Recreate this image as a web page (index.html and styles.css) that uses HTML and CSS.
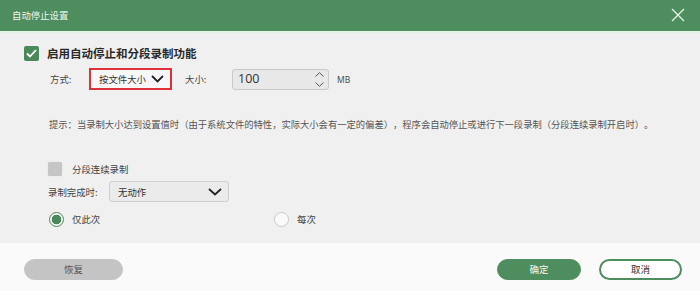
FILE: index.html
```html
<!DOCTYPE html>
<html lang="zh-CN">
<head>
<meta charset="utf-8">
<link rel="stylesheet" href="styles.css">
</head>
<body>
<div class="dialog">
  <header class="titlebar">
    <span class="title">自动停止设置</span>
    <svg class="close" width="14" height="14" viewBox="0 0 14 14"><path d="M1 1 L13 13 M13 1 L1 13" stroke="#e6f5e9" stroke-width="1.3" fill="none"/></svg>
  </header>
  <main class="content">
    <div class="row-main">
      <span class="check on"><svg width="11" height="9" viewBox="0 0 11 9"><path d="M1 4.5 L4 7.5 L10 1" stroke="#fff" stroke-width="1.8" fill="none"/></svg></span>
      <span class="main-label">启用自动停止和分段录制功能</span>
    </div>
    <div class="row-mode">
      <span class="lbl lbl-mode">方式:</span>
      <div class="select select-red">
        <span>按文件大小</span>
        <svg width="13" height="8" viewBox="0 0 13 8"><path d="M1 1 L6.5 6.5 L12 1" stroke="#222" stroke-width="1.8" fill="none"/></svg>
      </div>
      <span class="lbl lbl-size">大小:</span>
      <div class="spin">
        <span class="spin-val">100</span>
        <div class="spin-arrows">
          <svg width="9" height="5" viewBox="0 0 9 5"><path d="M0.5 4.5 L4.5 0.7 L8.5 4.5" stroke="#555" stroke-width="1" fill="none"/></svg>
          <svg width="9" height="5" viewBox="0 0 9 5"><path d="M0.5 0.5 L4.5 4.3 L8.5 0.5" stroke="#555" stroke-width="1" fill="none"/></svg>
        </div>
      </div>
      <span class="unit">MB</span>
    </div>
    <p class="hint">提示：当录制大小达到设置值时（由于系统文件的特性，实际大小会有一定的偏差），程序会自动停止或进行下一段录制（分段连续录制开启时）。</p>
    <div class="row-seg">
      <span class="check off"></span>
      <span class="lbl">分段连续录制</span>
    </div>
    <div class="row-done">
      <span class="lbl lbl-done">录制完成时:</span>
      <div class="select select-gray">
        <span>无动作</span>
        <svg width="14" height="8" viewBox="0 0 14 8"><path d="M1 1 L7 6.5 L13 1" stroke="#222" stroke-width="1.8" fill="none"/></svg>
      </div>
    </div>
    <div class="row-radio">
      <label class="opt"><span class="radio sel"></span><span class="lbl">仅此次</span></label>
      <label class="opt"><span class="radio"></span><span class="lbl">每次</span></label>
    </div>
  </main>
  <footer class="footer">
    <button class="btn btn-reset">恢复</button>
    <span class="spacer"></span>
    <button class="btn btn-ok">确定</button>
    <button class="btn btn-cancel">取消</button>
  </footer>
</div>
</body>
</html>
```
FILE: styles.css
```css
* { box-sizing: border-box; }
html, body { margin: 0; padding: 0; }
body {
  width: 700px;
  height: 291px;
  font-family: "Noto Sans CJK SC", "Noto Sans", sans-serif;
  color: #333;
  overflow: hidden;
}
.dialog {
  display: flex;
  flex-direction: column;
  height: 291px;
}
.titlebar {
  height: 33px;
  background: #4e8e5e;
  border-bottom: 2px solid #e2f4e6;
  display: flex;
  align-items: center;
  padding: 0 15px 0 12px;
  flex: none;
}
.title {
  font-size: 9.4px;
  line-height: 12px;
  color: #eef7f0;
  flex: 1;
  margin-top: -1px;
}
.close { margin-top: -1px; }
.content {
  background: #f0f0f0;
  height: 210px;
  padding: 13px 0 0 24px;
  flex: none;
}
.row-main {
  display: flex;
  align-items: center;
  height: 15px;
}
.check {
  width: 15px;
  height: 15px;
  border-radius: 2px;
  display: inline-flex;
  align-items: center;
  justify-content: center;
  flex: none;
}
.check.on { background: #4a8a5a; }
.check.off {
  width: 14px;
  height: 14px;
  background: #c6c6c6;
  box-shadow: 0 0 1px #c6c6c6;
}
.main-label {
  margin-left: 8px;
  font-size: 11.5px;
  font-weight: 700;
  line-height: 15px;
  color: #2a2a2a;
}
.lbl {
  font-size: 9.4px;
  line-height: 14px;
  color: #444;
  white-space: nowrap;
}
.row-mode {
  display: flex;
  align-items: center;
  height: 22px;
  margin-top: 7px;
  padding-left: 26px;
}
.lbl-mode { width: 39px; }
.select {
  display: flex;
  align-items: center;
  justify-content: space-between;
  font-size: 9.4px;
  color: #333;
}
.select-red {
  width: 83px;
  height: 22px;
  border: 2px solid #e0313b;
  background: #f7f7f7;
  padding: 0 6px 0 8px;
}
.lbl-size { margin-left: 13px; width: 47px; }
.spin {
  width: 97px;
  height: 21px;
  border: 1px solid #c9c9c9;
  border-radius: 3px;
  background: #e8e8e8;
  display: flex;
  align-items: center;
  justify-content: space-between;
  padding: 0 3px 0 5px;
}
.spin-val {
  font-family: "Open Sans", "Noto Sans", sans-serif;
  font-size: 12.5px;
  color: #333;
  line-height: 16px;
}
.spin-arrows {
  display: flex;
  flex-direction: column;
  gap: 5px;
  margin-right: 1px;
}
.spin-arrows svg { display: block; }
.unit {
  margin-left: 8px;
  font-family: "Open Sans", "Noto Sans", sans-serif;
  font-size: 8.5px;
  color: #444;
}
.hint {
  margin: 27px 0 0 25px;
  font-size: 9.3px;
  line-height: 14px;
  color: #555;
  white-space: nowrap;
  text-spacing-trim: space-all;
}
.row-seg {
  display: flex;
  align-items: center;
  gap: 10px;
  height: 14px;
  margin-top: 31px;
  padding-left: 24px;
}
.row-done {
  display: flex;
  align-items: center;
  height: 21px;
  margin-top: 5px;
  padding-left: 24px;
}
.lbl-done { width: 61px; }
.select-gray {
  width: 120px;
  height: 21px;
  border: 1px solid #cfcfcf;
  border-radius: 3px;
  background: #ebebeb;
  padding: 0 6px 0 8px;
}
.row-radio {
  display: flex;
  align-items: center;
  height: 14px;
  margin-top: 10px;
  padding-left: 25px;
}
.opt {
  display: flex;
  align-items: center;
  gap: 8px;
  width: 225px;
}
.radio {
  width: 15px;
  height: 15px;
  border-radius: 50%;
  border: 1px solid #c9c9c9;
  background: #fafafa;
  flex: none;
}
.radio.sel {
  border: 1.5px solid #4a8a5a;
  background: radial-gradient(circle, #4a8a5a 0 4.6px, #f5f5f5 5.1px);
}
.footer {
  flex: 1;
  background: #fafafa;
  display: flex;
  align-items: flex-start;
  padding: 16px 18px 0 24px;
  gap: 18px;
}
.spacer { flex: 1; }
.btn {
  height: 21px;
  border-radius: 11px;
  font-family: "Noto Sans CJK SC", sans-serif;
  font-size: 9.5px;
  padding: 0;
  line-height: 17px;
}
.btn-reset {
  width: 99px;
  background: #c4c4c4;
  border: 1px solid #c4c4c4;
  color: #555;
}
.btn-ok {
  width: 84px;
  background: #4e8e5e;
  border: 1px solid #4e8e5e;
  color: #f2f8f3;
}
.btn-cancel {
  width: 83px;
  background: #fff;
  border: 2px solid #4e8e5e;
  color: #333;
}
```
